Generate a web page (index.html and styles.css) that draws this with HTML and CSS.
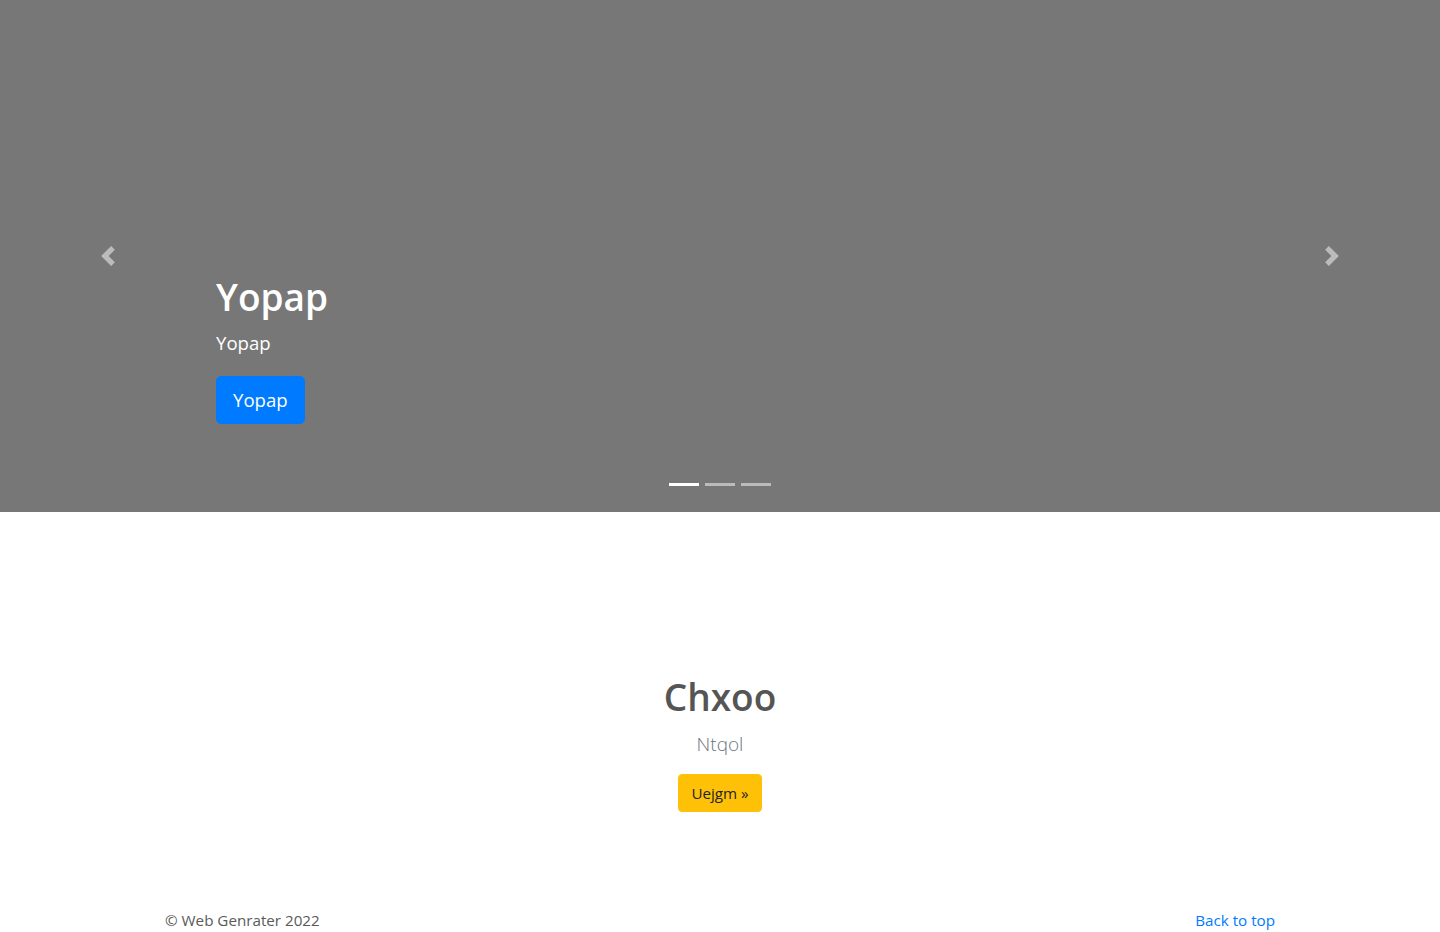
FILE: index.html
```html
<!DOCTYPE html>
<html lang="en">
<head>
<meta charset="utf-8">
<title>Yopap</title>
<link rel="stylesheet" href="styles.css">
</head>
<body>
<header class="carousel">
  <a class="ctrl" href="#" aria-label="Previous">
    <svg class="ctrl-icon" viewBox="0 0 8 8" width="20" height="20"><path fill="#fff" d="M5.25 0l-4 4 4 4 1.5-1.5L4.25 4l2.5-2.5L5.25 0z"/></svg>
  </a>
  <div class="stage">
    <div class="caption">
      <h1 class="caption-title">Yopap</h1>
      <p class="caption-text">Yopap</p>
      <a class="btn btn-lg btn-primary" href="#">Yopap</a>
    </div>
    <ol class="indicators">
      <li class="indicator active"></li>
      <li class="indicator"></li>
      <li class="indicator"></li>
    </ol>
  </div>
  <a class="ctrl" href="#" aria-label="Next">
    <svg class="ctrl-icon" viewBox="0 0 8 8" width="20" height="20"><path fill="#fff" d="M2.75 0l-1.5 1.5L3.75 4l-2.5 2.5L2.75 8l4-4-4-4z"/></svg>
  </a>
</header>

<main class="feature">
  <h2 class="feature-title">Chxoo</h2>
  <p class="feature-lead">Ntqol</p>
  <a class="btn btn-warning" href="#">Uejgm &raquo;</a>
</main>

<footer class="footer">
  <p class="footer-text">&copy; Web Genrater 2022</p>
  <a class="footer-link" href="#">Back to top</a>
</footer>
</body>
</html>
```

FILE: styles.css
```css
* { box-sizing: border-box; }

body {
  margin: 0;
  font-family: "Open Sans", "Noto Sans", "Liberation Sans", sans-serif;
  font-size: 15.2px;
  line-height: 24px;
  color: #5a5a5a;
  background: #fff;
}

.carousel {
  display: grid;
  grid-template-columns: 15% 1fr 15%;
  height: 512px;
  background: #777;
}

.ctrl {
  display: flex;
  align-items: center;
  justify-content: center;
  opacity: 0.5;
}

.ctrl-icon { display: block; }

.stage {
  display: flex;
  flex-direction: column;
  justify-content: flex-end;
}

.caption {
  display: flex;
  flex-direction: column;
  align-items: flex-start;
  color: #fff;
}

.caption-title {
  margin: 0 0 8px;
  font-size: 37px;
  font-weight: 600;
  line-height: 46px;
}

.caption-text {
  margin: 0 0 18px;
  font-size: 18.6px;
  line-height: 30px;
}

.btn {
  display: inline-block;
  border: 1px solid transparent;
  text-decoration: none;
  font-size: 15.2px;
  line-height: 24px;
  padding: 6px 12px;
  border-radius: 4px;
}

.btn-lg {
  font-size: 18.6px;
  line-height: 30px;
  padding: 8px 16px;
  border-radius: 5px;
}

.btn-primary {
  background: #007bff;
  border-color: #007bff;
  color: #fff;
}

.btn-warning {
  background: #ffc107;
  border-color: #ffc107;
  color: #212529;
}

.indicators {
  display: flex;
  justify-content: center;
  gap: 6px;
  list-style: none;
  margin: 59px 0 26px;
  padding: 0;
}

.indicator {
  width: 30px;
  height: 3px;
  background: #fff;
  opacity: 0.5;
}

.indicator.active { opacity: 1; }

.feature {
  display: flex;
  flex-direction: column;
  align-items: center;
  padding-top: 161px;
}

.feature-title {
  margin: 0 0 8px;
  font-size: 37px;
  font-weight: 600;
  line-height: 48px;
  color: #555;
}

.feature-lead {
  margin: 0 0 15px;
  font-size: 19px;
  font-weight: 300;
  line-height: 30px;
  color: #6c757d;
}

.footer {
  display: flex;
  justify-content: space-between;
  width: 1140px;
  margin: 96px auto 0;
  padding: 0 15px 48px;
}

.footer-text { margin: 0; }

.footer-link {
  color: #007bff;
  text-decoration: none;
}
```
